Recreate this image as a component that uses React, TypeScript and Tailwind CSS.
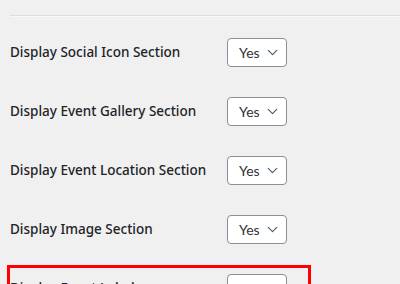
import { ChevronDown } from 'lucide-react'

const ROWS = [
  'Display Social Icon Section',
  'Display Event Gallery Section',
  'Display Event Location Section',
  'Display Image Section',
]

function YesSelect() {
  return (
    <div
      className="w-[60px] h-[29px] shrink-0 flex items-center justify-between pl-[11px] pr-[5px] bg-white border border-[#8c8f94] rounded-[4px] text-[14px] text-[#2c3338]"
      style={{ fontFamily: 'Lato, sans-serif' }}
    >
      <span>Yes</span>
      <ChevronDown className="size-[17px] text-[#50575e]" strokeWidth={1.6} />
    </div>
  )
}

function Row({ label }: { label: string }) {
  return (
    <div className="flex items-center">
      <span className="w-[217px] shrink-0 text-[13.5px] font-medium text-[#1d2327]">{label}</span>
      <YesSelect />
    </div>
  )
}

export default function App() {
  return (
    <div
      className="w-[400px] h-[284px] overflow-hidden bg-[#f0f0f1] pt-[15px] pl-[10px]"
      style={{ fontFamily: '"Noto Sans", sans-serif' }}
    >
      <div className="h-px bg-[#dcdcde] border-b border-[#f9f9f9] box-content" />
      <div className="pt-[6px]">
        {ROWS.map((r) => (
          <div key={r} className="py-[15px]">
            <Row label={r} />
          </div>
        ))}
        <div className="mt-[6px] -ml-[3px] w-[304px] border-[3px] border-[#ff0000] pt-[6px] pb-[10px]">
          <Row label="Display Event Label" />
        </div>
      </div>
    </div>
  )
}
